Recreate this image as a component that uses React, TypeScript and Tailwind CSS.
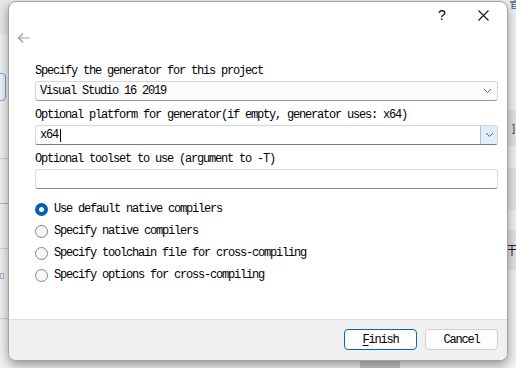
import React from "react";

const mono = { fontFamily: '"Liberation Mono", "Noto Sans CJK SC", monospace' } as const;

function Chevron() {
  return (
    <svg width="9" height="6" viewBox="0 0 9 6" className="block">
      <path d="M1 1 L4.5 4.5 L8 1" fill="none" stroke="#5f5f5f" strokeWidth="1" />
    </svg>
  );
}

function Radio({ checked, label }: { checked?: boolean; label: string }) {
  return (
    <div className="h-[22px] flex items-center">
      {checked ? (
        <div className="w-[13px] h-[13px] rounded-full bg-[#005fb8] flex items-center justify-center">
          <div className="w-[5px] h-[5px] rounded-full bg-white" />
        </div>
      ) : (
        <div className="w-[13px] h-[13px] rounded-full border border-[#858585] bg-[#f7f7f7]" />
      )}
      <span className="ml-[6px] text-[12px] tracking-[-1.2px] text-black leading-none" style={mono}>
        {label}
      </span>
    </div>
  );
}

export default function App() {
  return (
    <div className="w-[516px] h-[368px] relative overflow-hidden bg-[#f3f3f3]">
      {/* underlying window fragments */}
      <div className="absolute left-0 top-0 w-[10px] h-[34px] bg-[#e9e9e9]" />
      <div className="absolute left-[-6px] top-[73px] w-[12px] h-[28px] rounded-[4px] border border-[#6fa6d8] bg-[#eef4fa]" />
      <div className="absolute left-0 top-[158px] w-[10px] h-px bg-[#d0d0d0]" />
      <div className="absolute left-0 top-[203px] w-[10px] h-px bg-[#b8b8b8]" />
      <div className="absolute left-0 top-[248px] w-[10px] h-px bg-[#d0d0d0]" />
      <div className="absolute left-0 top-[273px] w-[4px] h-[6px] border border-[#9fbad6]" />
      <div className="absolute left-0 top-[318px] w-[10px] h-px bg-[#d0d0d0]" />
      <div className="absolute right-0 top-[110px] w-[10px] h-[36px] bg-[#e4e4e4]" />
      <div className="absolute right-[1px] top-[123px] text-[11px] leading-none text-[#1a3a6a]" style={{ fontFamily: '"Liberation Sans", sans-serif' }}>]</div>
      <div className="absolute right-[-4px] top-[168px] w-[12px] h-[42px] rounded-[4px] bg-[#e6e6e6]" />
      <div className="absolute right-0 top-[230px] w-[10px] h-[40px] bg-[#e4e4e4]" />
      <div className="absolute right-[-2px] top-[244px] text-[12px] leading-none text-[#222]" style={{ fontFamily: '"Noto Sans CJK SC", sans-serif' }}>干</div>
      <div className="absolute right-[-5px] top-[-3px] text-[12px] leading-none text-[#3a5f8f]" style={{ fontFamily: '"Noto Sans CJK SC", sans-serif' }}>管</div>
      <div className="absolute left-[360px] top-[361px] w-[40px] h-[7px] bg-[#c8c8c8]" />

      {/* dialog */}
      <div className="ml-[8px] mt-[1px] w-[500px] h-[360px] relative flex flex-col rounded-[8px] border border-[#a3a3a3] bg-white overflow-hidden shadow-[0_4px_12px_rgba(0,0,0,0.4)]">
        {/* title bar */}
        <div className="h-[26px] flex items-center justify-end">
          <span className="w-[20px] text-center text-[14px] text-black mr-[26px]" style={{ fontFamily: '"Liberation Sans", sans-serif' }}>?</span>
          <svg width="11" height="11" viewBox="0 0 11 11" className="mr-[18px]">
            <path d="M0.5 0.5 L10.5 10.5 M10.5 0.5 L0.5 10.5" stroke="#111" strokeWidth="1.1" />
          </svg>
        </div>
        {/* back arrow */}
        <div className="h-[20px] flex items-center pl-[8px] pb-[1px]">
          <svg width="13" height="12" viewBox="0 0 13 12">
            <path d="M12.5 6 H1.5 M6 1.5 L1.5 6 L6 10.5" fill="none" stroke="#9b9b9b" strokeWidth="1.2" />
          </svg>
        </div>
        {/* content */}
        <div className="flex-1 flex flex-col pl-[26px] pr-[9px] pt-[9px]">
          <div className="h-[24px] flex items-center pt-[3px] text-[12px] tracking-[-1.2px] text-black" style={mono}>
            Specify the generator for this project
          </div>
          <div className="h-[20px] flex items-center rounded-[3px] border border-[#d6d6d6] border-b-[#9c9c9c] bg-[#fbfbfb]">
            <span className="flex-1 pl-[4px] text-[12px] tracking-[-1.2px] text-black" style={mono}>Visual Studio 16 2019</span>
            <div className="w-[18px] flex items-center justify-center mr-px"><Chevron /></div>
          </div>
          <div className="h-[24px] flex items-center pt-[3px] text-[12px] tracking-[-1.2px] text-black" style={mono}>
            Optional platform for generator(if empty, generator uses: x64)
          </div>
          <div className="h-[20px] flex items-stretch rounded-[3px] border border-[#d6d6d6] border-b-[#7a7a7a] bg-white">
            <div className="flex-1 flex items-center pl-[4px]">
              <span className="text-[12px] tracking-[-1.2px] text-black" style={mono}>x64</span>
              <span className="w-px h-[13px] bg-black ml-[2px]" />
            </div>
            <div className="w-[17px] flex items-center justify-center bg-[#e1eefa] border-l border-[#9ec3e6] rounded-r-[2px]">
              <Chevron />
            </div>
          </div>
          <div className="h-[24px] flex items-center pt-[3px] text-[12px] tracking-[-1.2px] text-black" style={mono}>
            Optional toolset to use (argument to -T)
          </div>
          <div className="h-[20px] rounded-[3px] border border-[#dcdcdc] border-b-[#8a8a8a] bg-white" />
          <div className="mt-[9px] flex flex-col">
            <Radio checked label="Use default native compilers" />
            <Radio label="Specify native compilers" />
            <Radio label="Specify toolchain file for cross-compiling" />
            <Radio label="Specify options for cross-compiling" />
          </div>
        </div>
        {/* footer */}
        <div className="h-[41px] border-t border-[#dcdcdc] bg-[#f0f0f0] flex items-start justify-end gap-[8px] pr-[9px] pt-[9px]">
          <button className="w-[73px] h-[21px] rounded-[4px] border border-[#0067c0] bg-[#fdfdfd] flex items-center justify-center text-[12px] tracking-[-1.2px] text-black leading-none" style={mono}>
            <span className="underline underline-offset-[2px]">F</span>inish
          </button>
          <button className="w-[73px] h-[21px] rounded-[4px] border border-[#d0d0d0] bg-[#fdfdfd] flex items-center justify-center text-[12px] tracking-[-1.2px] text-black leading-none" style={mono}>
            Cancel
          </button>
        </div>
      </div>
    </div>
  );
}
